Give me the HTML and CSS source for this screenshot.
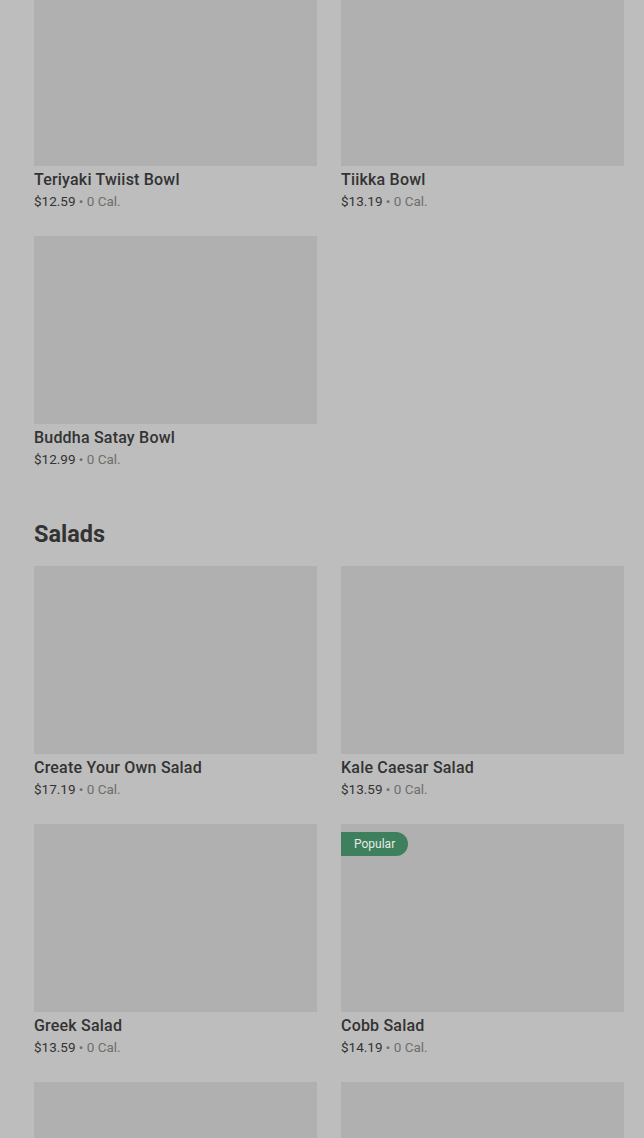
FILE: index.html
```html
<!DOCTYPE html>
<html lang="en">
<head>
  <meta charset="UTF-8" />
  <meta name="viewport" content="width=device-width, initial-scale=1.0" />
  <title>Menu</title>
  <link rel="stylesheet" href="styles.css">
</head>
<body>
  <main class="menu">
    <section class="menu-section first">
      <div class="item-grid">
        <div class="item">
          <div class="item-image"></div>
          <div class="item-name">Teriyaki Twiist Bowl</div>
          <div class="item-meta">$12.59 <span class="cal">• 0 Cal.</span></div>
        </div>
        <div class="item">
          <div class="item-image"></div>
          <div class="item-name">Tiikka Bowl</div>
          <div class="item-meta">$13.19 <span class="cal">• 0 Cal.</span></div>
        </div>
        <div class="item">
          <div class="item-image"></div>
          <div class="item-name">Buddha Satay Bowl</div>
          <div class="item-meta">$12.99 <span class="cal">• 0 Cal.</span></div>
        </div>
      </div>
    </section>

    <section class="menu-section">
      <h2 class="section-title">Salads</h2>
      <div class="item-grid">
        <div class="item">
          <div class="item-image"></div>
          <div class="item-name">Create Your Own Salad</div>
          <div class="item-meta">$17.19 <span class="cal">• 0 Cal.</span></div>
        </div>
        <div class="item">
          <div class="item-image"></div>
          <div class="item-name">Kale Caesar Salad</div>
          <div class="item-meta">$13.59 <span class="cal">• 0 Cal.</span></div>
        </div>
        <div class="item">
          <div class="item-image"></div>
          <div class="item-name">Greek Salad</div>
          <div class="item-meta">$13.59 <span class="cal">• 0 Cal.</span></div>
        </div>
        <div class="item">
          <div class="item-image">
            <span class="badge">Popular</span>
          </div>
          <div class="item-name">Cobb Salad</div>
          <div class="item-meta">$14.19 <span class="cal">• 0 Cal.</span></div>
        </div>
        <div class="item">
          <div class="item-image"></div>
          <div class="item-name">&nbsp;</div>
          <div class="item-meta">&nbsp;</div>
        </div>
        <div class="item">
          <div class="item-image"></div>
          <div class="item-name">&nbsp;</div>
          <div class="item-meta">&nbsp;</div>
        </div>
      </div>
    </section>
  </main>
</body>
</html>
```

FILE: styles.css
```css
html, body {
  height: 100%;
  overflow: hidden;
}
body {
  margin: 0;
  background: #bdbdbd;
  font-family: Roboto, "Liberation Sans", sans-serif;
  color: #333;
}
.menu {
  padding: 0 20px 0 34px;
}
.menu-section.first {
  margin-top: -22px;
}
.section-title {
  margin: 49px 0 16px;
  font-size: 23.5px;
  line-height: 32px;
  font-weight: 700;
  color: #333;
}
.item-grid {
  display: grid;
  grid-template-columns: repeat(2, 283px);
  column-gap: 24px;
  row-gap: 25px;
}
.item-image {
  position: relative;
  height: 188px;
  background: #b0b0b0;
}
.item-name {
  padding-top: 2px;
  font-size: 16px;
  line-height: 24px;
  font-weight: 500;
  letter-spacing: 0.2px;
  color: #333;
}
.item-meta {
  margin-top: -1px;
  font-size: 13.5px;
  line-height: 20px;
  color: #333;
}
.item-meta .cal {
  color: #6e6e6e;
}
.badge {
  position: absolute;
  top: 8px;
  left: 0;
  padding: 0 13px;
  height: 24px;
  line-height: 24px;
  font-size: 12px;
  color: #e4ece6;
  background: #3e7f5d;
  border-radius: 0 12px 12px 0;
}
```
